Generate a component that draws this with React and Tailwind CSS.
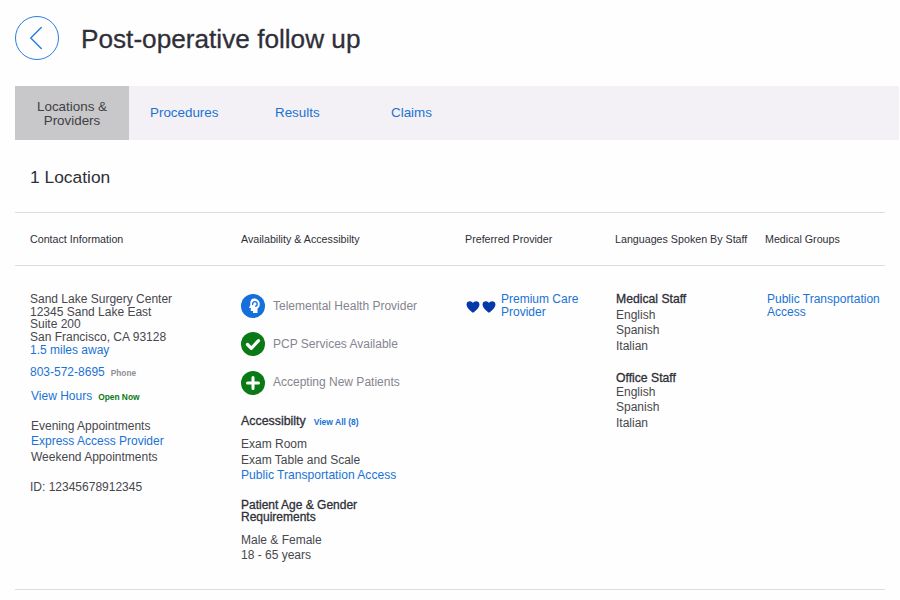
import React from 'react';
import { ChevronLeft } from 'lucide-react';

const Services = [
  { label: 'Telemental Health Provider', color: 'bg-[#1570dc]', icon: 'head' },
  { label: 'PCP Services Available', color: 'bg-[#0a7a17]', icon: 'check' },
  { label: 'Accepting New Patients', color: 'bg-[#0a7a17]', icon: 'plus' },
];

const ServiceIcon = ({ icon }) => {
  if (icon === 'check') {
    return (
      <svg viewBox="0 0 24 24" className="w-[24px] h-[24px]">
        <path d="M6.500 12.500l3.800 3.800 7.200-7.600" fill="none" stroke="#fff" strokeWidth="3.200" strokeLinecap="round" strokeLinejoin="round" />
      </svg>
    );
  }
  if (icon === 'plus') {
    return (
      <svg viewBox="0 0 24 24" className="w-[24px] h-[24px]">
        <path d="M12 6.500v11M6.500 12h11" fill="none" stroke="#fff" strokeWidth="3" strokeLinecap="round" />
      </svg>
    );
  }
  return (
    <svg viewBox="0 0 24 24" className="w-[24px] h-[24px]">
      <path d="M13 4.500c3.500 0 5.800 2.500 5.800 5.600 0 2.100-.9 3.500-2.300 4.600V19H12v-2H9.800v-3H8l1.400-3.200C8.800 7.200 10.300 4.500 13 4.500z" fill="#fff" />
      <path d="M11.800 11c-.5-1.800.6-3.400 2.100-3.400 1.300 0 2.300 1 2.300 2.300s-1 2.300-2.200 2.300" fill="none" stroke="#1570dc" strokeWidth="1.300" />
    </svg>
  );
};

const Heart = () => (
  <svg viewBox="0 0 24 24" className="w-[14px] h-[14px]">
    <path d="M12 22C7 17.500 1 13 1 7.500 1 4 3.500 2 6.500 2 8.800 2 10.800 3.200 12 5.200 13.200 3.200 15.200 2 17.500 2 20.500 2 23 4 23 7.500 23 13 17 17.500 12 22z" fill="#0437a8" />
  </svg>
);

export default function App() {
  return (
    <div className="w-[900px] h-[600px] overflow-hidden bg-[#fefefe] font-['Liberation_Sans',Arial,sans-serif] text-[12px] leading-[12.7px] text-[#47474d]">
      <header className="flex items-start gap-[22px] pl-[15px] pt-[16px] h-[86px]">
        <div className="w-[44px] h-[44px] rounded-full border-[1.5px] border-[#2a7de1] flex items-center justify-center">
          <ChevronLeft size={42} strokeWidth={0.85} className="shrink-0 text-[#2a7de1] mr-[2px]" />
        </div>
        <h1 className="text-[26.2px] leading-[46px] font-normal text-[#2f2f38] [-webkit-text-stroke:0.3px_#2f2f38]">Post-operative follow up</h1>
      </header>

      <nav className="ml-[15px] mr-[1px] h-[54px] bg-[#f3f1f5] flex text-[13.4px] leading-[14px] text-[#1a73d4]">
        <div className="w-[114px] pt-[1px] bg-[#c8c7c9] text-[#3f3f45] flex items-center justify-center text-center">Locations &amp;<br />Providers</div>
        <div className="ml-[21px] w-[125px] flex items-center">Procedures</div>
        <div className="w-[116px] flex items-center">Results</div>
        <div className="flex items-center">Claims</div>
      </nav>

      <h2 className="pl-[30px] pt-[28px] pb-[26px] text-[17.4px] leading-[18px] font-normal text-[#2f2f38]">1 Location</h2>

      <div className="ml-[15px] w-[870px] border-t border-b border-[#dddcdf] h-[54px] pt-[1px] flex items-center text-[10.7px] text-[#2f2f38]">
        <div className="grid grid-cols-[211px_224px_150px_150px_1fr] w-full pl-[15px]">
          <div>Contact Information</div>
          <div>Availability &amp; Accessibilty</div>
          <div>Preferred Provider</div>
          <div>Languages Spoken By Staff</div>
          <div>Medical Groups</div>
        </div>
      </div>

      <div className="ml-[15px] w-[870px] h-[324px] border-b border-[#dddcdf] pt-[27px] pl-[15px] grid grid-cols-[211px_224px_150px_150px_1fr]">
        <div>
          <div>Sand Lake Surgery Center</div>
          <div>12345 Sand Lake East</div>
          <div>Suite 200</div>
          <div>San Francisco, CA 93128</div>
          <div className="text-[#1a73d4]">1.5 miles away</div>
          <div className="mt-[9.500px] flex items-baseline gap-[6px]">
            <span className="text-[#1a73d4]">803-572-8695</span>
            <span className="text-[8.300px] font-bold text-[#8e8e94]">Phone</span>
          </div>
          <div className="mt-[10px] flex items-baseline gap-[6px] pl-[1px]">
            <span className="text-[#1a73d4]">View Hours</span>
            <span className="text-[8.400px] font-bold text-[#0a7a17]">Open Now</span>
          </div>
          <div className="mt-[15.500px] leading-[15.500px] pl-[1px]">
            <div>Evening Appointments</div>
            <div className="text-[#1a73d4]">Express Access Provider</div>
            <div>Weekend Appointments</div>
          </div>
          <div className="mt-[16px]">ID: 12345678912345</div>
        </div>

        <div className="pt-[1px]">
          <div className="flex flex-col gap-[14.300px]">
            {Services.map((s) => (
              <div key={s.label} className="flex items-center gap-[8px] text-[#85858f]">
                <span className={`w-[24px] h-[24px] rounded-full flex items-center justify-center ${s.color}`}>
                  <ServiceIcon icon={s.icon} />
                </span>
                {s.label}
              </div>
            ))}
          </div>
          <div className="mt-[20.500px] flex items-baseline gap-[8px]">
            <span className="text-[12.400px] text-[#2f2f38] [-webkit-text-stroke:0.3px_#2f2f38]">Accessibilty</span>
            <span className="text-[8.500px] font-bold text-[#1a73d4]">View All (8)</span>
          </div>
          <div className="mt-[8px] leading-[15.700px]">
            <div>Exam Room</div>
            <div>Exam Table and Scale</div>
            <div className="text-[#1a73d4] text-[12.100px]">Public Transportation Access</div>
          </div>
          <div className="mt-[15px] text-[12px] leading-[12.400px] text-[#2f2f38] [-webkit-text-stroke:0.3px_#2f2f38]">Patient Age &amp; Gender<br />Requirements</div>
          <div className="mt-[9.500px] leading-[15.200px]">
            <div>Male &amp; Female</div>
            <div>18 - 65 years</div>
          </div>
        </div>

        <div className="flex items-start gap-[6px] pl-[1px]">
          <div className="flex gap-[2px] mt-[7px]">
            <Heart />
            <Heart />
          </div>
          <div className="text-[#1a73d4] ml-[-1px]">Premium Care<br />Provider</div>
        </div>

        <div className="pl-[1px] leading-[15.500px] -mt-[1px]">
          <div className="text-[12.200px] text-[#2f2f38] [-webkit-text-stroke:0.3px_#2f2f38]">Medical Staff</div>
          <div>English</div>
          <div>Spanish</div>
          <div>Italian</div>
          <div className="mt-[16.500px] text-[12.200px] leading-[14px] text-[#2f2f38] [-webkit-text-stroke:0.3px_#2f2f38]">Office Staff</div>
          <div>English</div>
          <div>Spanish</div>
          <div>Italian</div>
        </div>

        <div className="pl-[2px] text-[#1a73d4]">Public Transportation<br />Access</div>
      </div>
    </div>
  );
}
